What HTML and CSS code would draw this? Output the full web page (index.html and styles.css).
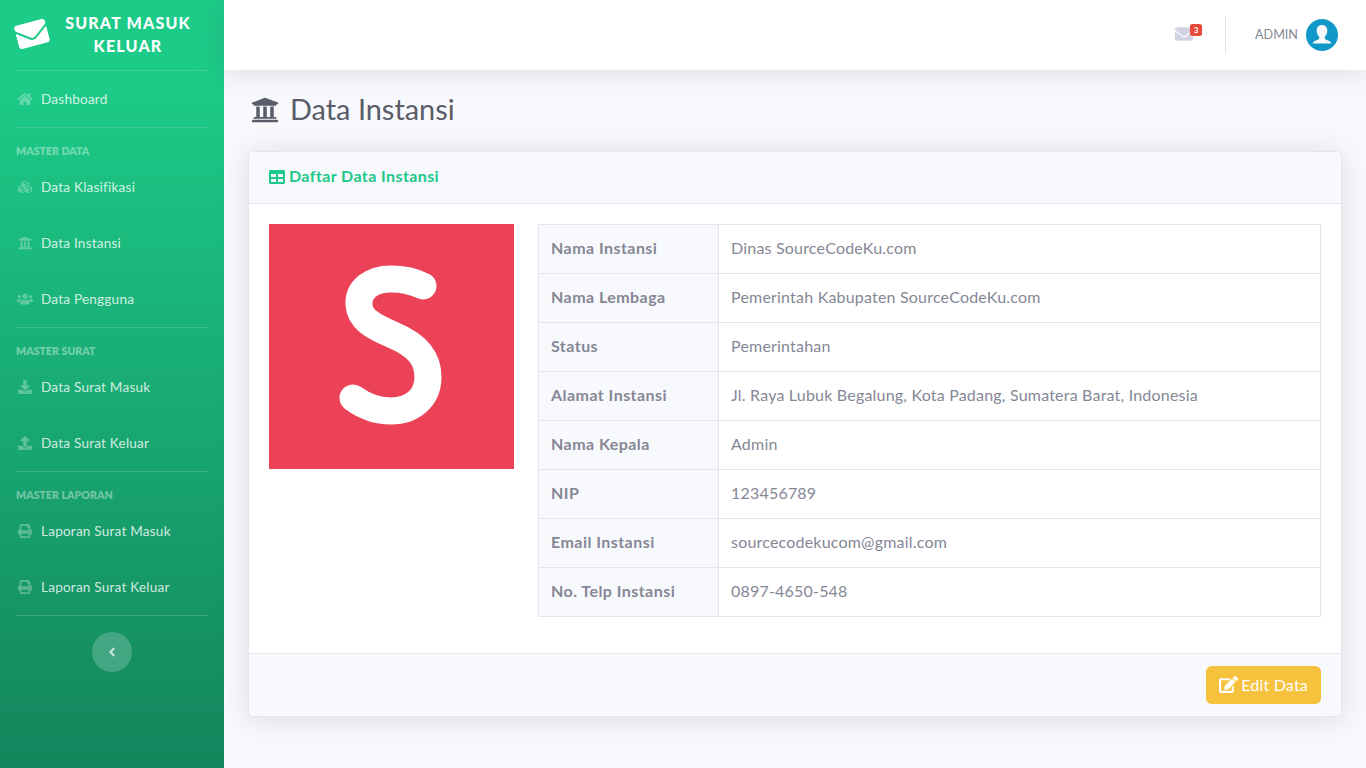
FILE: index.html
```html
<!DOCTYPE html>
<html lang="id">
<head>
<meta charset="utf-8">
<title>Data Instansi</title>
<link rel="stylesheet" href="styles.css">
</head>
<body>
<svg class="defs" aria-hidden="true">
<symbol id="i-envelope" viewBox="0 0 512 512"><path d="M502.3 190.8c3.9-3.1 9.7-.2 9.7 4.7V400c0 26.5-21.5 48-48 48H48c-26.5 0-48-21.5-48-48V195.6c0-5 5.7-7.8 9.7-4.7 22.4 17.4 52.1 39.5 154.1 113.6 21.1 15.4 56.7 47.8 92.2 47.6 35.7.3 72-32.8 92.3-47.6 102-74.1 131.6-96.3 154-113.7zM256 320c23.2.4 56.6-29.2 73.4-41.4 132.7-96.3 142.8-104.7 173.4-128.7 5.8-4.5 9.2-11.5 9.2-18.9v-19c0-26.5-21.5-48-48-48H48C21.5 64 0 85.5 0 112v19c0 7.4 3.4 14.3 9.2 18.9 30.6 23.9 40.7 32.4 173.4 128.7 16.8 12.2 50.2 41.8 73.4 41.4z"/></symbol>
<symbol id="i-home" viewBox="0 0 576 512"><path d="M280.37 148.26L96 300.11V464a16 16 0 0 0 16 16l112.06-.29a16 16 0 0 0 15.92-16V368a16 16 0 0 1 16-16h64a16 16 0 0 1 16 16v95.64a16 16 0 0 0 16 16.05L464 480a16 16 0 0 0 16-16V300L295.67 148.26a12.19 12.19 0 0 0-15.3 0zM571.6 251.47L488 182.56V44.05a12 12 0 0 0-12-12h-56a12 12 0 0 0-12 12v72.61L318.47 43a48 48 0 0 0-61 0L4.34 251.47a12 12 0 0 0-1.6 16.9l25.5 31A12 12 0 0 0 45.15 301l235.22-193.74a12.19 12.19 0 0 1 15.3 0L530.9 301a12 12 0 0 0 16.9-1.6l25.5-31a12 12 0 0 0-1.7-16.93z"/></symbol>
<symbol id="i-cubes" viewBox="0 0 512 512"><path d="M488.6 250.2L392 214V105.5c0-15-9.3-28.4-23.4-33.7l-100-37.5c-8.1-3.1-17.1-3.1-25.3 0l-100 37.5c-14.1 5.3-23.4 18.7-23.4 33.7V214l-96.6 36.2C9.3 255.5 0 268.9 0 283.9V394c0 13.6 7.7 26.1 19.9 32.2l100 50c10.1 5.1 22.1 5.1 32.2 0l103.9-52 103.9 52c10.1 5.1 22.1 5.1 32.2 0l100-50c12.2-6.1 19.9-18.6 19.9-32.2V283.9c0-15-9.3-28.4-23.4-33.7zM358 214.8l-85 31.9v-68.2l85-37v73.3zM154 104.1l102-38.2 102 38.2v.6l-102 41.4-102-41.4v-.6zm84 291.1l-85 42.5v-79.1l85-38.8v75.4zm0-112l-102 41.4-102-41.4v-.6l102-38.2 102 38.2v.6zm240 112l-85 42.5v-79.1l85-38.8v75.4zm0-112l-102 41.4-102-41.4v-.6l102-38.2 102 38.2v.6z"/></symbol>
<symbol id="i-university" viewBox="0 0 512 512"><path d="M496 128v16a8 8 0 0 1-8 8h-24v12c0 6.627-5.373 12-12 12H60c-6.627 0-12-5.373-12-12v-12H24a8 8 0 0 1-8-8v-16a8 8 0 0 1 4.941-7.392l232-88a7.996 7.996 0 0 1 6.118 0l232 88A8 8 0 0 1 496 128zm-24 304H40c-13.255 0-24 10.745-24 24v16a8 8 0 0 0 8 8h464a8 8 0 0 0 8-8v-16c0-13.255-10.745-24-24-24zM96 192v192H60c-6.627 0-12 5.373-12 12v20h416v-20c0-6.627-5.373-12-12-12h-36V192h-64v192h-64V192h-64v192h-64V192H96z"/></symbol>
<symbol id="i-users" viewBox="0 0 640 512"><path d="M96 224c35.3 0 64-28.7 64-64s-28.7-64-64-64-64 28.7-64 64 28.7 64 64 64zm448 0c35.3 0 64-28.7 64-64s-28.7-64-64-64-64 28.7-64 64 28.7 64 64 64zm32 32h-64c-17.6 0-33.5 7.1-45.1 18.6 40.3 22.1 68.9 62 75.1 109.4h66c17.7 0 32-14.3 32-32v-32c0-35.3-28.7-64-64-64zm-256 0c61.9 0 112-50.1 112-112S381.9 32 320 32 208 82.1 208 144s50.1 112 112 112zm76.8 32h-8.3c-20.8 10-43.9 16-68.5 16s-47.6-6-68.5-16h-8.3C179.6 288 128 339.6 128 403.2V432c0 26.5 21.5 48 48 48h288c26.5 0 48-21.5 48-48v-28.8c0-63.6-51.6-115.2-115.2-115.2zm-223.7-13.4C161.5 263.1 145.6 256 128 256H64c-35.3 0-64 28.7-64 64v32c0 17.7 14.3 32 32 32h65.9c6.3-47.4 34.9-87.3 75.2-109.4z"/></symbol>
<symbol id="i-download" viewBox="0 0 512 512"><path d="M216 0h80c13.3 0 24 10.7 24 24v168h87.7c17.8 0 26.7 21.5 14.1 34.1L269.7 378.3c-7.5 7.5-19.8 7.5-27.3 0L90.1 226.1c-12.6-12.6-3.7-34.1 14.1-34.1H192V24c0-13.3 10.7-24 24-24zm296 376v112c0 13.3-10.7 24-24 24H24c-13.3 0-24-10.7-24-24V376c0-13.3 10.7-24 24-24h146.7l49 49c20.1 20.1 52.5 20.1 72.6 0l49-49H488c13.3 0 24 10.7 24 24zm-124 88c0-11-9-20-20-20s-20 9-20 20 9 20 20 20 20-9 20-20zm64 0c0-11-9-20-20-20s-20 9-20 20 9 20 20 20 20-9 20-20z"/></symbol>
<symbol id="i-upload" viewBox="0 0 512 512"><path d="M296 384h-80c-13.3 0-24-10.7-24-24V192h-87.7c-17.8 0-26.7-21.5-14.1-34.1L242.3 5.7c7.5-7.5 19.8-7.5 27.3 0l152.2 152.2c12.6 12.6 3.7 34.1-14.1 34.1H320v168c0 13.3-10.7 24-24 24zm216-8v112c0 13.3-10.7 24-24 24H24c-13.3 0-24-10.7-24-24V376c0-13.3 10.7-24 24-24h136v8c0 30.9 25.1 56 56 56h80c30.9 0 56-25.1 56-56v-8h136c13.3 0 24 10.7 24 24zm-124 88c0-11-9-20-20-20s-20 9-20 20 9 20 20 20 20-9 20-20zm64 0c0-11-9-20-20-20s-20 9-20 20 9 20 20 20 20-9 20-20z"/></symbol>
<symbol id="i-print" viewBox="0 0 512 512"><path d="M448 192V77.25c0-8.49-3.37-16.62-9.37-22.63L393.37 9.37c-6-6-14.14-9.37-22.63-9.37H96C78.33 0 64 14.33 64 32v160c-35.35 0-64 28.65-64 64v112c0 8.84 7.16 16 16 16h48v96c0 17.67 14.33 32 32 32h320c17.67 0 32-14.33 32-32v-96h48c8.84 0 16-7.16 16-16V256c0-35.35-28.65-64-64-64zm-64 256H128v-96h256v96zm0-224H128V64h192v48c0 8.84 7.16 16 16 16h48v96zm48 72c-13.25 0-24-10.75-24-24 0-13.26 10.75-24 24-24s24 10.74 24 24c0 13.25-10.75 24-24 24z"/></symbol>
<symbol id="i-angle" viewBox="0 0 256 512"><path d="M31.7 239l136-136c9.4-9.4 24.6-9.4 33.9 0l22.6 22.6c9.4 9.4 9.4 24.6 0 33.9L127.9 256l96.4 96.4c9.4 9.4 9.4 24.6 0 33.9L201.7 413c-9.4 9.4-24.6 9.4-33.9 0l-136-136c-9.5-9.4-9.5-24.6-.1-34z"/></symbol>
<symbol id="i-table" viewBox="0 0 512 512"><path d="M464 32H48C21.49 32 0 53.49 0 80v352c0 26.51 21.49 48 48 48h416c26.51 0 48-21.49 48-48V80c0-26.51-21.49-48-48-48zM224 416H64v-96h160v96zm0-160H64v-96h160v96zm224 160H288v-96h160v96zm0-160H288v-96h160v96z"/></symbol>
<symbol id="i-edit" viewBox="0 0 576 512"><path d="M402.6 83.2l90.2 90.2c3.8 3.8 3.8 10 0 13.8L274.4 405.6l-92.8 10.3c-12.4 1.4-22.9-9.1-21.5-21.5l10.3-92.8L388.8 83.2c3.8-3.8 10-3.8 13.8 0zm162-22.9l-48.8-48.8c-15.2-15.2-39.9-15.2-55.2 0l-35.4 35.4c-3.8 3.8-3.8 10 0 13.8l90.2 90.2c3.8 3.8 10 3.8 13.8 0l35.4-35.4c15.2-15.3 15.2-40 0-55.2zM384 346.2V448H64V128h229.8c3.2 0 6.2-1.3 8.5-3.5l40-40c7.6-7.6 2.2-20.5-8.5-20.5H48C21.5 64 0 85.5 0 112v352c0 26.5 21.5 48 48 48h352c26.5 0 48-21.5 48-48V306.2c0-10.7-12.9-16-20.5-8.5l-40 40c-2.2 2.3-3.5 5.3-3.5 8.5z"/></symbol>
</svg>

<div class="wrapper">
  <aside class="sidebar">
    <a class="brand">
      <svg class="brand-icon"><use href="#i-envelope"/></svg>
      <span class="brand-text">Surat Masuk Keluar</span>
    </a>
    <hr class="divider flush">
    <a class="nav-item"><svg class="nav-icon"><use href="#i-home"/></svg><span>Dashboard</span></a>
    <hr class="divider">
    <div class="nav-heading">Master Data</div>
    <a class="nav-item"><svg class="nav-icon"><use href="#i-cubes"/></svg><span>Data Klasifikasi</span></a>
    <a class="nav-item"><svg class="nav-icon"><use href="#i-university"/></svg><span>Data Instansi</span></a>
    <a class="nav-item"><svg class="nav-icon"><use href="#i-users"/></svg><span>Data Pengguna</span></a>
    <hr class="divider">
    <div class="nav-heading">Master Surat</div>
    <a class="nav-item"><svg class="nav-icon"><use href="#i-download"/></svg><span>Data Surat Masuk</span></a>
    <a class="nav-item"><svg class="nav-icon"><use href="#i-upload"/></svg><span>Data Surat Keluar</span></a>
    <hr class="divider">
    <div class="nav-heading">Master Laporan</div>
    <a class="nav-item"><svg class="nav-icon"><use href="#i-print"/></svg><span>Laporan Surat Masuk</span></a>
    <a class="nav-item"><svg class="nav-icon"><use href="#i-print"/></svg><span>Laporan Surat Keluar</span></a>
    <hr class="divider">
    <button class="toggle"><svg class="toggle-icon"><use href="#i-angle"/></svg></button>
  </aside>

  <div class="content">
    <header class="topbar">
      <a class="alert">
        <svg class="alert-icon"><use href="#i-envelope"/></svg>
        <span class="badge">3</span>
      </a>
      <div class="topbar-divider"></div>
      <a class="user">
        <span class="user-name">ADMIN</span>
        <svg class="avatar" viewBox="0 0 32 32">
          <circle class="avatar-bg" cx="16" cy="16" r="16"/>
          <path class="avatar-fg" d="M16 6c-3.4 0-5.3 2.4-5.3 5.600 0 2.600 1 4.800 2.500 6.100v1.500c0 .9-.8 1.400-2.500 2-2.100.8-3.700 1.500-4.200 3.300h19c-.5-1.800-2.100-2.500-4.200-3.300-1.700-.6-2.500-1.100-2.500-2v-1.500c1.500-1.300 2.500-3.500 2.500-6.100C21.300 8.400 19.400 6 16 6z"/>
        </svg>
      </a>
    </header>

    <main class="page">
      <h1 class="page-title"><svg class="title-icon"><use href="#i-university"/></svg><span>Data Instansi</span></h1>

      <section class="card">
        <div class="card-header">
          <svg class="header-icon"><use href="#i-table"/></svg><span>Daftar Data Instansi</span>
        </div>
        <div class="card-body">
          <svg class="logo" viewBox="0 0 245 245" role="img" aria-label="Logo">
            <rect class="logo-bg" width="245" height="245"/>
            <path class="logo-s" d="M154 62C144 57 133 55 122 55C103 55 89 65 90 81C91 95 103 102 124 111C148 121 159 134 159 153C159 174 143 187 122 187C107 187 95 182 84 174"/>
          </svg>
          <table class="info">
            <tbody>
              <tr><th>Nama Instansi</th><td>Dinas SourceCodeKu.com</td></tr>
              <tr><th>Nama Lembaga</th><td>Pemerintah Kabupaten SourceCodeKu.com</td></tr>
              <tr><th>Status</th><td>Pemerintahan</td></tr>
              <tr><th>Alamat Instansi</th><td>Jl. Raya Lubuk Begalung, Kota Padang, Sumatera Barat, Indonesia</td></tr>
              <tr><th>Nama Kepala</th><td>Admin</td></tr>
              <tr><th>NIP</th><td>123456789</td></tr>
              <tr><th>Email Instansi</th><td>sourcecodekucom@gmail.com</td></tr>
              <tr><th>No. Telp Instansi</th><td>0897-4650-548</td></tr>
            </tbody>
          </table>
        </div>
        <div class="card-footer">
          <a class="btn-edit"><svg class="btn-icon"><use href="#i-edit"/></svg><span>Edit Data</span></a>
        </div>
      </section>
    </main>
  </div>
</div>
</body>
</html>
```
FILE: styles.css
```css
* { box-sizing: border-box; }
html, body { margin: 0; height: 100%; }
body {
  font-family: "Lato", "Noto Sans", sans-serif;
  font-size: 16px;
  letter-spacing: 0.2px;
  color: #858796;
  background: #f8f9fc;
  overflow: hidden;
}
.defs { display: none; }
svg { fill: currentColor; display: block; flex: none; }

.wrapper { display: flex; min-height: 768px; }

.sidebar {
  width: 224px;
  flex: none;
  min-height: 768px;
  display: flex;
  flex-direction: column;
  background: linear-gradient(180deg, #1dcb88 10%, #13855c 100%);
}
.brand {
  height: 70px;
  display: flex;
  align-items: center;
  padding: 0 14px 2px;
  color: #fff;
}
.brand-icon { width: 32px; height: 32px; margin: 0 6px 0 2px; transform: rotate(-15deg); }
.brand-text {
  flex: 1;
  padding: 0 12px 0 4px;
  font-weight: 900;
  font-size: 16px;
  line-height: 23.5px;
  letter-spacing: 1.2px;
  text-align: center;
  text-transform: uppercase;
}
.divider {
  height: 1px;
  margin: 0 16px 16px;
  border: 0;
  flex: none;
  background: rgba(255, 255, 255, 0.15);
}
.divider.flush { margin-bottom: 0; }
.nav-item {
  height: 56px;
  flex: none;
  display: flex;
  align-items: center;
  gap: 8px;
  padding-left: 17px;
  font-size: 13.6px;
  color: rgba(255, 255, 255, 0.8);
}
.nav-icon { width: 16px; height: 14px; color: rgba(255, 255, 255, 0.3); }
.nav-item + .divider { margin-top: 0; }
.nav-heading {
  height: 15px;
  flex: none;
  padding-left: 16px;
  font-size: 10.6px;
  line-height: 15px;
  font-weight: 800;
  letter-spacing: 0;
  text-transform: uppercase;
  color: rgba(255, 255, 255, 0.4);
}
.toggle {
  width: 40px;
  height: 40px;
  padding: 0;
  margin: 0 auto;
  border: 0;
  border-radius: 50%;
  display: flex;
  align-items: center;
  justify-content: center;
  background: rgba(255, 255, 255, 0.2);
  color: rgba(255, 255, 255, 0.7);
}
.toggle-icon { width: 8px; height: 14px; }

.content { flex: 1; min-width: 0; display: flex; flex-direction: column; }
.topbar {
  height: 70px;
  flex: none;
  display: flex;
  align-items: center;
  justify-content: flex-end;
  padding-right: 28px;
  background: #fff;
  box-shadow: 0 2.4px 28px rgba(58, 59, 69, 0.15);
  position: relative;
}
.alert { position: relative; width: 18px; height: 18px; margin-right: 32px; color: #d1d3e2; }
.alert-icon { width: 18px; height: 18px; margin-top: -1px; }
.badge {
  position: absolute;
  top: -2px;
  left: 15px;
  width: 12px;
  height: 12px;
  border-radius: 2.5px;
  background: #e74a3b;
  color: #fff;
  font-size: 8px;
  font-weight: 700;
  letter-spacing: 0;
  line-height: 12px;
  text-align: center;
}
.topbar-divider { width: 1px; height: 38px; background: #e3e6f0; margin-right: 29px; }
.user { display: flex; align-items: center; gap: 8px; }
.user-name { font-size: 12.6px; letter-spacing: 0; padding-bottom: 2px; color: #858796; }
.avatar { width: 32px; height: 32px; }
.avatar-bg { fill: #0f98c8; }
.avatar-fg { fill: #f8f9fc; }

.page { padding: 24px 24px 0; }
.page-title {
  display: flex;
  align-items: center;
  gap: 11px;
  height: 33px;
  margin: 0 0 24px;
  padding-left: 3px;
  font-size: 28.9px;
  font-weight: 400;
  letter-spacing: 0;
  line-height: 31px;
  color: #5a5c69;
}
.title-icon { width: 28px; height: 28px; margin-bottom: 2px; }
.page-title span { padding-bottom: 4px; }

.card {
  background: #fff;
  border: 1px solid #e3e6f0;
  border-radius: 5.6px;
  box-shadow: 0 2.4px 28px rgba(58, 59, 69, 0.15);
  overflow: hidden;
}
.card-header {
  height: 52px;
  display: flex;
  align-items: center;
  gap: 4px;
  padding: 0 20px;
  background: #f8f9fc;
  border-bottom: 1px solid #e3e6f0;
  color: #1cc88a;
  font-weight: 700;
  letter-spacing: 0.4px;
}
.card-header span { padding-bottom: 4px; }
.header-icon { width: 16px; height: 16px; margin-top: -1px; }
.card-body {
  display: flex;
  align-items: flex-start;
  gap: 24px;
  padding: 20px 20px 36px;
}
.logo { width: 245px; height: 245px; }
.logo-bg { fill: #ec4257; }
.logo-s { fill: none; stroke: #fff; stroke-width: 27; stroke-linecap: round; stroke-linejoin: round; }
.info { flex: 1; border-collapse: collapse; }
.info th, .info td {
  height: 49px;
  padding: 0 12px 4px;
  border: 1px solid #e3e6f0;
  text-align: left;
  vertical-align: middle;
}
.info th { width: 180px; background: #f8f9fc; font-weight: 700; letter-spacing: 0.45px; }
.card-footer {
  display: flex;
  justify-content: flex-end;
  padding: 12px 20px;
  background: #f8f9fc;
  border-top: 1px solid #e3e6f0;
}
.btn-edit {
  height: 38px;
  display: flex;
  align-items: center;
  gap: 3px;
  padding: 0 13px;
  background: #f6c23e;
  border-radius: 5.6px;
  color: #fff;
}
.btn-edit span { padding-bottom: 2px; }
.btn-icon { width: 19px; height: 17px; margin-bottom: 2px; }
```
